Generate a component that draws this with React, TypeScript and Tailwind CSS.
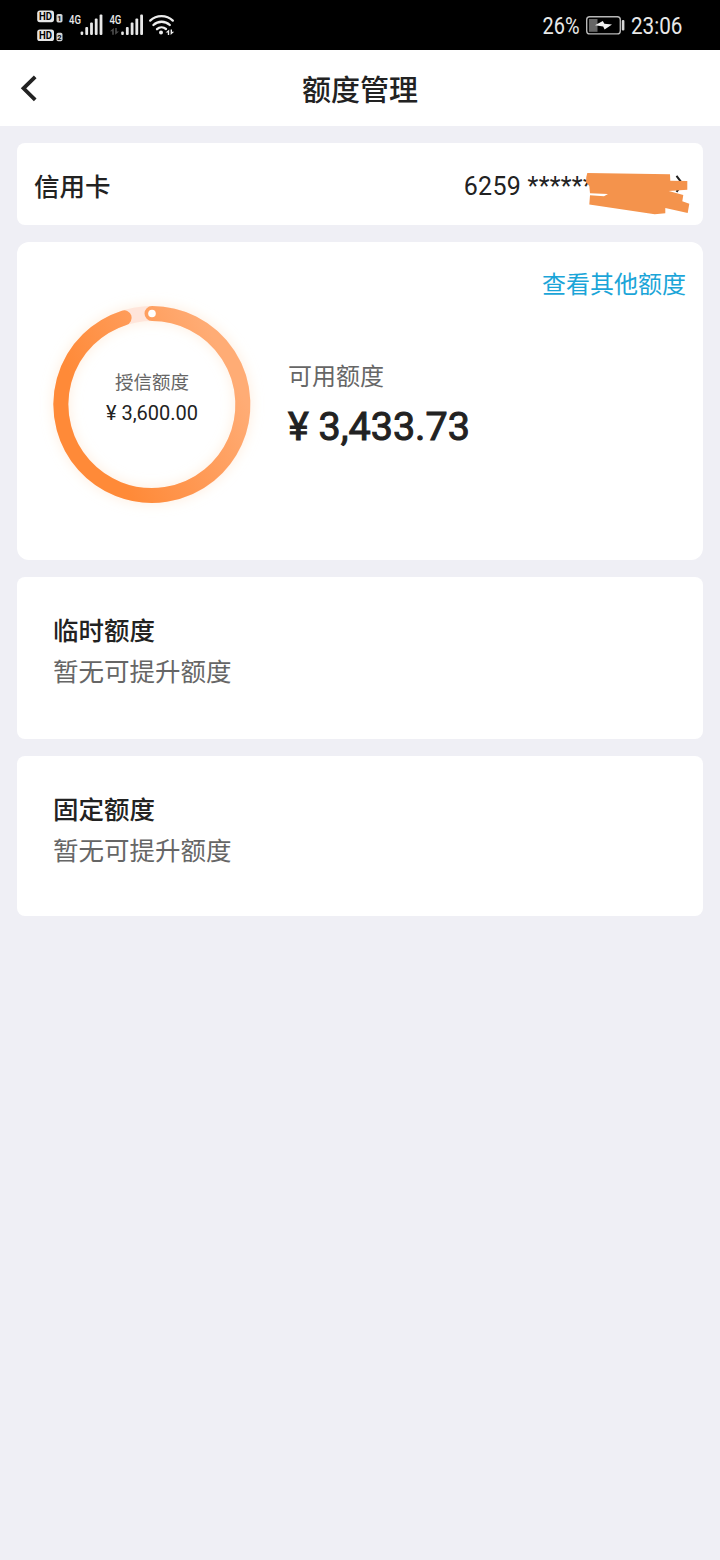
import type { ReactNode } from "react";
import clsx from "clsx";

const limits = [
  { title: "临时额度", note: "暂无可提升额度", height: "h-[162px]" },
  { title: "固定额度", note: "暂无可提升额度", height: "h-[160px]" },
];

function Card({ className, children }: { className?: string; children: ReactNode }) {
  return <section className={clsx("bg-white", className)}>{children}</section>;
}

function HdBadge({ y, sim }: { y: number; sim: string }) {
  return (
    <g>
      <rect x="37.2" y={y} width="16.8" height="11.6" rx="2.6" fill="#e6e6e6" />
      <text x="39" y={y + 9.6} fontSize="10.5" fontWeight="700" fill="#000" textLength="13" lengthAdjust="spacingAndGlyphs">
        HD
      </text>
      <rect x="56.5" y={y + 3.4} width="6" height="8.4" rx="1.6" fill="#d4d4d4" />
      <text x="59.5" y={y + 10.2} fontSize="7.5" fontWeight="700" fill="#000" textAnchor="middle">
        {sim}
      </text>
    </g>
  );
}

function SignalBars({ x }: { x: number }) {
  return (
    <g fill="#e8e8e8">
      <rect x={x} y="31.5" width="2.6" height="3.5" rx="1" />
      <rect x={x + 4.7} y="27" width="2.8" height="8" rx="1" />
      <rect x={x + 9.5} y="22.5" width="2.8" height="12.5" rx="1" />
      <rect x={x + 14.2} y="18.5" width="2.8" height="16.5" rx="1" />
      <rect x={x + 19} y="14.5" width="2.8" height="20.5" rx="1" />
    </g>
  );
}

function StatusBar() {
  return (
    <div className="flex h-[50px] justify-between bg-black">
      <svg width="180" height="50" viewBox="0 0 180 50" className="font-['Roboto',sans-serif]">
        <HdBadge y={10.6} sim="1" />
        <HdBadge y={29.4} sim="2" />
        <text x="69" y="24" fontSize="13.5" fontWeight="500" fill="#e8e8e8" textLength="12" lengthAdjust="spacingAndGlyphs">
          4G
        </text>
        <SignalBars x={80.6} />
        <text x="109.4" y="24" fontSize="13.5" fontWeight="500" fill="#e8e8e8" textLength="12" lengthAdjust="spacingAndGlyphs">
          4G
        </text>
        <path d="M113.8 28v6.8h-1.6v-3.6h-2.2ZM115.2 34.8V28h1.6v3.4h2.2Z" fill="#4d4d4d" />
        <SignalBars x={121.2} />
        <g fill="none" stroke="#ededed" strokeWidth="2.3" strokeLinecap="round">
          <path d="M150.2 20.6a16.5 16.5 0 0 1 22.6 0" />
          <path d="M153.4 25a12 12 0 0 1 16.4 0" />
          <path d="M157 29.2a6.8 6.8 0 0 1 9-.2" />
        </g>
        <circle cx="161" cy="32.6" r="2" fill="#ededed" />
        <path d="M169.2 29.4v5.6h-1.4v-2.4h-2.2ZM170.6 35v-5.6h1.4v2.4h2.2Z" fill="#ededed" />
      </svg>
      <svg width="190" height="50" viewBox="530 0 190 50" className="font-['Roboto',sans-serif]">
        <text x="542.5" y="34" fontSize="23.5" fill="#e8e8e8" textLength="37" lengthAdjust="spacingAndGlyphs">
          26%
        </text>
        <rect x="586.7" y="16.7" width="33.6" height="17.2" rx="3" fill="none" stroke="#b8b8b8" strokeWidth="1.4" />
        <rect x="589" y="19" width="8.5" height="12.8" fill="#666" />
        <path d="m595 25.2 7.8-4.2 1.6 2.8 7.6.8-7.4 4.9-1.4-3Z" fill="#f2f2f2" />
        <rect x="621.8" y="20" width="2.6" height="10.6" rx="1" fill="#d6d6d6" />
        <text x="631" y="34" fontSize="23.5" fill="#e8e8e8" textLength="51.5" lengthAdjust="spacingAndGlyphs">
          23:06
        </text>
      </svg>
    </div>
  );
}

function CreditRing() {
  return (
    <div className="grid size-[230px] shrink-0 place-items-center">
      <svg viewBox="-115 -115.5 230 230" className="col-start-1 row-start-1 size-full">
        <defs>
          <linearGradient id="ring" gradientUnits="userSpaceOnUse" x1="-85" y1="-35" x2="45" y2="-100">
            <stop offset="0" stopColor="#ff8a38" />
            <stop offset="0.5" stopColor="#ff9a56" />
            <stop offset="1" stopColor="#ffac75" />
          </linearGradient>
          <filter id="glow" x="-20%" y="-20%" width="140%" height="140%">
            <feGaussianBlur stdDeviation="6" />
          </filter>
        </defs>
        <circle r="91" fill="none" stroke="#ffe3c8" strokeOpacity="0.5" strokeWidth="18" filter="url(#glow)" />
        <circle r="91" fill="none" stroke="#ffe5da" strokeWidth="15" />
        <path
          d="M0-91A91 91 0 1 1-27.8-86.7"
          fill="none"
          stroke="url(#ring)"
          strokeWidth="15"
          strokeLinecap="round"
        />
        <circle cx="0" cy="-91" r="3.8" fill="#fff" />
      </svg>
      <div className="col-start-1 row-start-1 -mt-3 text-center">
        <p className="text-[18.5px] leading-[30px] text-[#666]">授信额度</p>
        <p className="text-[20px] leading-[30px] text-[#222]">¥ 3,600.00</p>
      </div>
    </div>
  );
}

export default function App() {
  return (
    <div className="min-h-[1560px] w-[720px] bg-[#efeff5] font-['Roboto','Noto_Sans_CJK_SC',sans-serif] text-[#222]">
      <StatusBar />
      <header className="grid h-[76px] grid-cols-[60px_1fr_60px] items-center bg-white">
        <svg width="60" height="76" viewBox="0 0 60 76" fill="none" stroke="#222" strokeWidth="3.8">
          <path d="M35.2 26.8 23.5 38.3 35.2 49.8" />
        </svg>
        <h1 className="pt-2 text-center text-[29px] font-medium">额度管理</h1>
      </header>

      <main className="flex flex-col gap-[17px] p-[17px]">
        <Card className="flex h-[82px] items-center justify-between rounded-lg pl-[17px]">
          <h2 className="pt-[6px] text-[25.5px] font-medium">信用卡</h2>
          <div className="flex h-full items-center">
            <span className="pt-[5px] text-[25px] tracking-[0.3px]">6259 ******</span>
            <svg width="110" height="82" viewBox="593 143 110 82" className="-ml-px overflow-visible">
              <path d="m676.5 175.8 6 8-6 8" fill="none" stroke="#222" strokeWidth="2" />
              <path
                d="M587.3 173 670 174.3l.3 6.4 17 .3v8.7l-18.6 1.3 14.6 4-1 6.3 7 2.4-1.6 9.3-22.4-5v5.3l-10.6 1-65.4-9.7.7-9.3 14 1 4-2.3-18-.7-.7-7.3-3.3-4 .3-5Z"
                fill="#f4934c"
              />
            </svg>
          </div>
        </Card>

        <Card className="flex h-[318px] flex-col rounded-xl">
          <a className="self-end pt-[25px] pr-[17px] text-[24px] leading-9 text-[#1ba5d8]">查看其他额度</a>
          <div className="-mt-[14px] ml-5 flex items-center gap-[21px]">
            <CreditRing />
            <div className="mt-2.5">
              <p className="text-[24px] leading-9 text-[#666]">可用额度</p>
              <p className="text-[39.5px] leading-[64px] [-webkit-text-stroke:1px_#222]">¥ 3,433.73</p>
            </div>
          </div>
        </Card>

        {limits.map((item) => (
          <Card key={item.title} className={clsx("rounded-lg px-9 pt-[34px]", item.height)}>
            <h2 className="text-[25.5px] leading-[41px] font-medium">{item.title}</h2>
            <p className="text-[25.5px] leading-[41px] text-[#666]">{item.note}</p>
          </Card>
        ))}
      </main>
    </div>
  );
}
